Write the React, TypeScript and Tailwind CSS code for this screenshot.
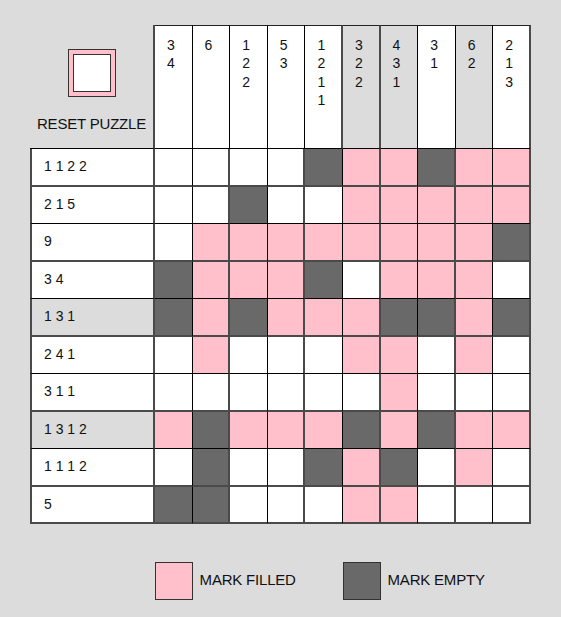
import React from 'react';

const rowClues = ['1 1 2 2', '2 1 5', '9', '3 4', '1 3 1', '2 4 1', '3 1 1', '1 3 1 2', '1 1 1 2', '5'];
const colClues = [
  ['3', '4'],
  ['6'],
  ['1', '2', '2'],
  ['5', '3'],
  ['1', '2', '1', '1'],
  ['3', '2', '2'],
  ['4', '3', '1'],
  ['3', '1'],
  ['6', '2'],
  ['2', '1', '3'],
];

// W = untouched, P = marked filled, D = marked empty
const board = [
  'WWWWDPPDPP',
  'WWDWWPPPPP',
  'WPPPPPPPPD',
  'DPPPDWPPPW',
  'DPDPPPDDPD',
  'WPWWWPPWPW',
  'WWWWWWPWWW',
  'PDPPPDPDPP',
  'WDWWDPDWPW',
  'DDWWWPPWWW',
];

const grayCols = [5, 6, 8];
const grayRows = [4, 7];
const thickHeadRight = [4, 5, 9];

const fill: Record<string, string> = {
  W: 'bg-white',
  P: 'bg-[#ffc0cb]',
  D: 'bg-[#696969]',
};

const rightBorder = (thick: boolean) =>
  thick ? 'border-r-2 border-r-[#4a4a4a]' : 'border-r border-r-black';
const bottomBorder = (thick: boolean) =>
  thick ? 'border-b-2 border-b-[#4a4a4a]' : 'border-b border-b-black';

const App: React.FC = () => {
  return (
    <div className="min-h-screen w-full bg-[#dcdcdc] pt-[25px] pl-[30px] font-['Liberation_Sans',Arial,sans-serif] text-[#111]">
      <div className="grid grid-cols-[125px_repeat(10,37.6px)]">
        {/* Reset corner */}
        <div className="flex h-[124px] flex-col items-center border-r-2 border-b border-r-[#4a4a4a] border-b-black pt-[24px]">
          <button className="h-12 w-12 border border-[#333] bg-[#ffc0cb] p-1">
            <div className="h-full w-full border border-[#333] bg-white" />
          </button>
          <div className="mt-[18px] text-[15px] leading-[17px] tracking-[-0.2px]">RESET PUZZLE</div>
        </div>

        {/* Column clues */}
        {colClues.map((clue, c) => (
          <div
            key={`h${c}`}
            className={`h-[124px] border-t border-t-[#222] border-b border-b-black pl-[12px] pt-[10px] text-[14px] leading-[18.33px] ${rightBorder(
              thickHeadRight.includes(c),
            )} ${grayCols.includes(c) ? 'bg-[#dcdcdc]' : 'bg-white'}`}
          >
            {clue.map((n, i) => (
              <div key={i}>{n}</div>
            ))}
          </div>
        ))}

        {/* Rows */}
        {board.map((row, r) => {
          const thickBottom = r % 2 === 0 || r === 9;
          return (
            <React.Fragment key={`r${r}`}>
              <div
                className={`flex h-[37.5px] items-center border-l-2 border-l-[#4a4a4a] border-r-2 border-r-[#4a4a4a] pl-[12px] text-[14px] ${bottomBorder(
                  thickBottom,
                )} ${grayRows.includes(r) ? 'bg-[#dcdcdc]' : 'bg-white'}`}
              >
                {rowClues[r]}
              </div>
              {row.split('').map((s, c) => (
                <div
                  key={c}
                  className={`h-[37.5px] ${fill[s]} ${rightBorder(c % 2 === 1)} ${bottomBorder(thickBottom)}`}
                />
              ))}
            </React.Fragment>
          );
        })}
      </div>

      {/* Legend */}
      <div className="mt-[37.5px] grid grid-cols-[125px_repeat(10,37.6px)]">
        <div />
        <div className="h-[38px] border border-[#333] bg-[#ffc0cb]" />
        <div className="col-span-4 flex items-center pl-[7px] text-[15px] tracking-[-0.2px]">MARK FILLED</div>
        <div className="h-[38px] border border-[#333] bg-[#696969]" />
        <div className="col-span-4 flex items-center pl-[7px] text-[15px] tracking-[-0.2px]">MARK EMPTY</div>
      </div>
    </div>
  );
};

export default App;
